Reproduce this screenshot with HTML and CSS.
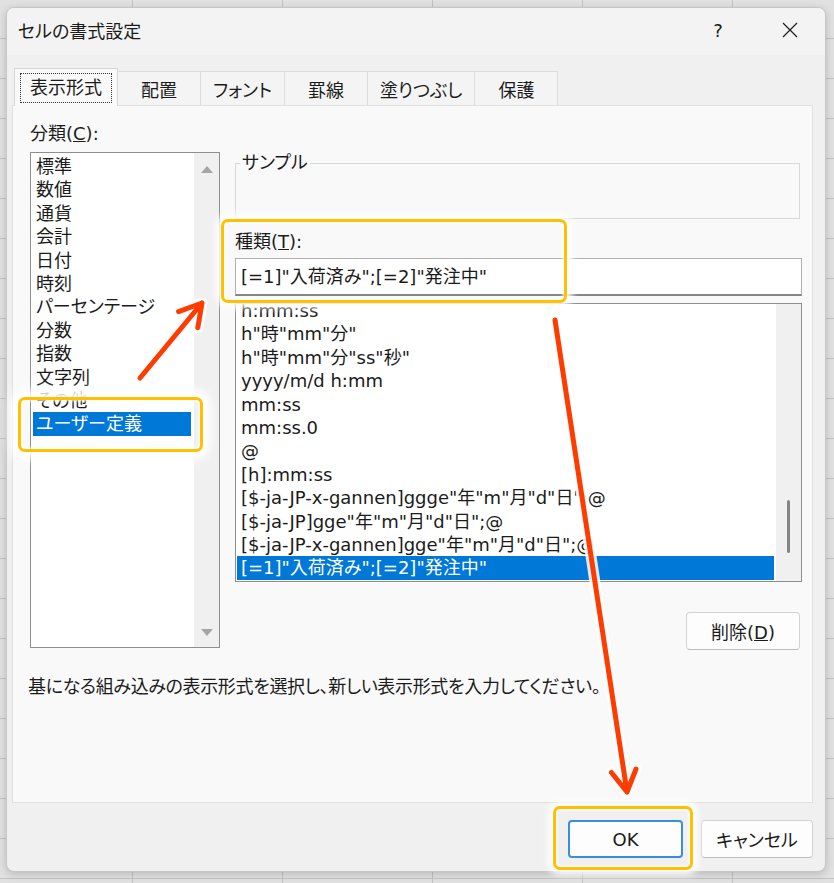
FILE: index.html
```html
<!DOCTYPE html>
<html lang="ja">
<head>
    <meta charset="UTF-8">
    <meta name="viewport" content="width=device-width, initial-scale=1.0">
    <title>セルの書式設定</title>
    <link rel="stylesheet" href="styles.css">
</head>
<body>
    <div class="dialog">
        <div class="titlebar">
            <span class="title">セルの書式設定</span>
            <span class="help">?</span>
            <span class="close">
                <svg width="16" height="16" viewBox="0 0 16 16"><path d="M1 1 L15 15 M15 1 L1 15" stroke="#222" stroke-width="1.3" fill="none"/></svg>
            </span>
        </div>

        <div class="tabs">
            <div class="tab active"><span class="focus">表示形式</span></div>
            <div class="tab">配置</div>
            <div class="tab">フォント</div>
            <div class="tab">罫線</div>
            <div class="tab">塗りつぶし</div>
            <div class="tab">保護</div>
        </div>

        <div class="panel">
            <div class="panel-main">
                <div class="cat-col">
                    <div class="label">分類(<u>C</u>):</div>
                    <div class="listbox cat-list">
                        <div class="items">
                            <div class="item">標準</div>
                            <div class="item">数値</div>
                            <div class="item">通貨</div>
                            <div class="item">会計</div>
                            <div class="item">日付</div>
                            <div class="item">時刻</div>
                            <div class="item">パーセンテージ</div>
                            <div class="item">分数</div>
                            <div class="item">指数</div>
                            <div class="item">文字列</div>
                            <div class="item">その他</div>
                            <div class="item selected">ユーザー定義</div>
                        </div>
                        <div class="scrollbar arrows">
                            <span class="tri-up"></span>
                            <span class="tri-down"></span>
                        </div>
                    </div>
                </div>

                <div class="fmt-col">
                    <fieldset class="sample">
                        <legend>サンプル</legend>
                    </fieldset>
                    <div class="label type-label">種類(<u>T</u>):</div>
                    <div class="textbox">[=1]"入荷済み";[=2]"発注中"</div>
                    <div class="listbox fmt-list">
                        <div class="items fmt-items">
                            <div class="item">h:mm:ss</div>
                            <div class="item">h"時"mm"分"</div>
                            <div class="item">h"時"mm"分"ss"秒"</div>
                            <div class="item">yyyy/m/d h:mm</div>
                            <div class="item">mm:ss</div>
                            <div class="item">mm:ss.0</div>
                            <div class="item">@</div>
                            <div class="item">[h]:mm:ss</div>
                            <div class="item">[$-ja-JP-x-gannen]ggge"年"m"月"d"日";@</div>
                            <div class="item">[$-ja-JP]gge"年"m"月"d"日";@</div>
                            <div class="item">[$-ja-JP-x-gannen]gge"年"m"月"d"日";@</div>
                            <div class="item selected">[=1]"入荷済み";[=2]"発注中"</div>
                        </div>
                        <div class="scrollbar">
                            <span class="thumb"></span>
                        </div>
                    </div>
                    <div class="btn-row">
                        <button class="btn delete">削除(<u>D</u>)</button>
                    </div>
                </div>
            </div>
            <p class="desc">基になる組み込みの表示形式を選択し、新しい表示形式を入力してください。</p>
        </div>

        <div class="footer">
            <button class="btn ok">OK</button>
            <button class="btn cancel">キャンセル</button>
        </div>
    </div>

    <!-- callouts drawn over the screenshot -->
    <div class="mark mark-type"></div>
    <div class="mark mark-cat"></div>
    <div class="mark mark-ok"></div>

    <svg class="arrows-layer" width="834" height="883" viewBox="0 0 834 883">
        <g stroke="#fff" stroke-width="11" stroke-linecap="round" stroke-linejoin="round" fill="none" opacity="0.85">
            <path d="M140 378 L202 303 M178.6 311.7 L202 303 L197.8 327.7"/>
            <path d="M555 320 L627 792 M611.4 772.5 L627 792 L636 769"/>
        </g>
        <g stroke="#ff3c00" stroke-width="5" stroke-linecap="round" stroke-linejoin="round" fill="none">
            <path d="M140 378 L202 303 M178.6 311.7 L202 303 L197.8 327.7"/>
            <path d="M555 320 L627 792 M611.4 772.5 L627 792 L636 769"/>
        </g>
    </svg>
</body>
</html>
```

FILE: styles.css
```css
body {
    margin: 0;
    width: 834px;
    height: 883px;
    overflow: hidden;
    position: relative;
    font-family: "DejaVu Sans", "Noto Sans CJK JP", sans-serif;
    font-feature-settings: "palt";
    font-size: 18px;
    color: #1b1b1b;
    background-color: #e1e1e1;
    background-image: linear-gradient(to right, #c2c2c2 1px, transparent 1px),
                      linear-gradient(to bottom, #c2c2c2 1px, transparent 1px);
    background-size: 150px 40px;
    background-position: 132px 38px;
}

.dialog {
    margin: 7px 0 0 6px;
    width: 820px;
    height: 865px;
    box-sizing: border-box;
    border: 1px solid #c6c6c6;
    border-radius: 8px;
    background: #f0f0f0;
    overflow: hidden;
    box-shadow: 0 2px 8px rgba(0, 0, 0, 0.18);
}

/* title bar */
.titlebar {
    height: 47px;
    display: flex;
    align-items: center;
    padding: 0 13px 0 11px;
    background: #f3f3f3;
}
.title {
    font-size: 18px;
    margin-top: -3px;
}
.help {
    margin-left: auto;
    width: 44px;
    text-align: center;
    font-size: 18px;
    margin-top: -3px;
}
.close {
    margin-left: 28px;
    width: 44px;
    display: flex;
    justify-content: center;
    margin-top: -3px;
}

/* tabs */
.tabs {
    margin-top: 13px;
    padding-left: 7px;
    height: 37px;
    display: flex;
    align-items: flex-end;
}
.tab {
    height: 34px;
    min-width: 83px;
    box-sizing: border-box;
    padding: 0 12px;
    display: flex;
    align-items: center;
    justify-content: center;
    background: #f4f4f4;
    border: 1px solid #dddddd;
    border-bottom: none;
    border-left: none;
}
.tab.active {
    height: 38px;
    margin-bottom: -1px;
    padding: 0 5px;
    background: #f9f9f9;
    border: 1px solid #d6d6d6;
    border-bottom: none;
    position: relative;
    z-index: 1;
}
.focus {
    border: 1px dotted #333;
    padding: 0 9px;
    line-height: 28px;
}

/* panel */
.panel {
    margin: 0 12px 0 5px;
    height: 698px;
    box-sizing: border-box;
    border: 1px solid #e0e0e0;
    background: #f9f9f9;
    padding: 16px 10px 0 17px;
}
.panel-main {
    display: grid;
    grid-template-columns: 190px 1fr;
    column-gap: 15px;
}
.label {
    line-height: 24px;
    margin-bottom: 6px;
}
.listbox {
    display: flex;
    box-sizing: border-box;
    border: 1px solid #8e8e8e;
    background: #fff;
    overflow: hidden;
}
.cat-list {
    height: 496px;
}
.items {
    flex: 1;
    padding-top: 2px;
    min-width: 0;
}
.item {
    line-height: 23.4px;
    white-space: nowrap;
    margin: 0 3px 0 2px;
    padding-left: 3px;
}
.item.selected {
    background: #0078d7;
    color: #fff;
}
.scrollbar {
    width: 25px;
    flex: none;
    background: #f0f0f0;
    display: flex;
    flex-direction: column;
    align-items: center;
}
.scrollbar.arrows {
    justify-content: space-between;
    padding: 13px 0 11px;
}
.tri-up {
    border-left: 6px solid transparent;
    border-right: 6px solid transparent;
    border-bottom: 7px solid #a5a5a5;
}
.tri-down {
    border-left: 6px solid transparent;
    border-right: 6px solid transparent;
    border-top: 7px solid #a5a5a5;
}
.thumb {
    margin-top: 196px;
    width: 3px;
    height: 53px;
    border-radius: 2px;
    background: #858585;
}

/* right column */
.sample {
    margin: 29px 2px 0 0;
    padding: 0 0 0 4px;
    height: 68px;
    box-sizing: border-box;
    border: 1px solid #d8d8d8;
}
.sample legend {
    padding: 0 2px;
    line-height: 24px;
}
.type-label {
    margin-top: 12px;
    line-height: 22px;
    margin-bottom: 5px;
}
.textbox {
    height: 38px;
    box-sizing: border-box;
    border: 1px solid #b0b0b0;
    border-bottom: 2px solid #868686;
    background: #fff;
    padding-left: 5px;
    line-height: 35px;
}
.fmt-list {
    margin-top: 7px;
    height: 279px;
}
.fmt-items {
    margin-top: -7px;
}
.fmt-items .item {
    margin: 0 2px 0 1px;
    padding-left: 4px;
}
.btn-row {
    margin-top: 30px;
    display: flex;
    justify-content: flex-end;
    padding-right: 2px;
}

.btn {
    height: 38px;
    box-sizing: border-box;
    font: inherit;
    color: #1b1b1b;
    background: #fdfdfd;
    border: 1px solid #d3d3d3;
    border-bottom-color: #bdbdbd;
    border-radius: 4px;
    padding: 0;
}
.delete {
    width: 114px;
}

.desc {
    margin: 26px 0 0 -2px;
    line-height: 22px;
    letter-spacing: -0.35px;
}

/* bottom buttons */
.footer {
    display: flex;
    justify-content: flex-end;
    gap: 18px;
    padding: 17px 12px 0 0;
}
.ok {
    width: 115px;
    border: 2px solid #3c8ddd;
}
.cancel {
    width: 112px;
}

/* yellow callout boxes */
.mark {
    position: absolute;
    box-sizing: border-box;
    border: 3px solid #ffc000;
    border-radius: 7px;
    box-shadow: 0 0 7px 5px rgba(255, 255, 255, 0.95), inset 0 0 3px 1px rgba(255, 255, 255, 0.9);
}
.mark-type {
    left: 221px;
    top: 219px;
    width: 346px;
    height: 84px;
}
.mark-cat {
    left: 18px;
    top: 397px;
    width: 185px;
    height: 55px;
    box-shadow: 0 0 8px 8px rgba(255, 255, 255, 0.92), inset 0 0 3px 1px rgba(255, 255, 255, 0.9);
}
.mark-ok {
    left: 553px;
    top: 806px;
    width: 140px;
    height: 64px;
}
.arrows-layer {
    position: absolute;
    left: 0;
    top: 0;
    pointer-events: none;
}
```
